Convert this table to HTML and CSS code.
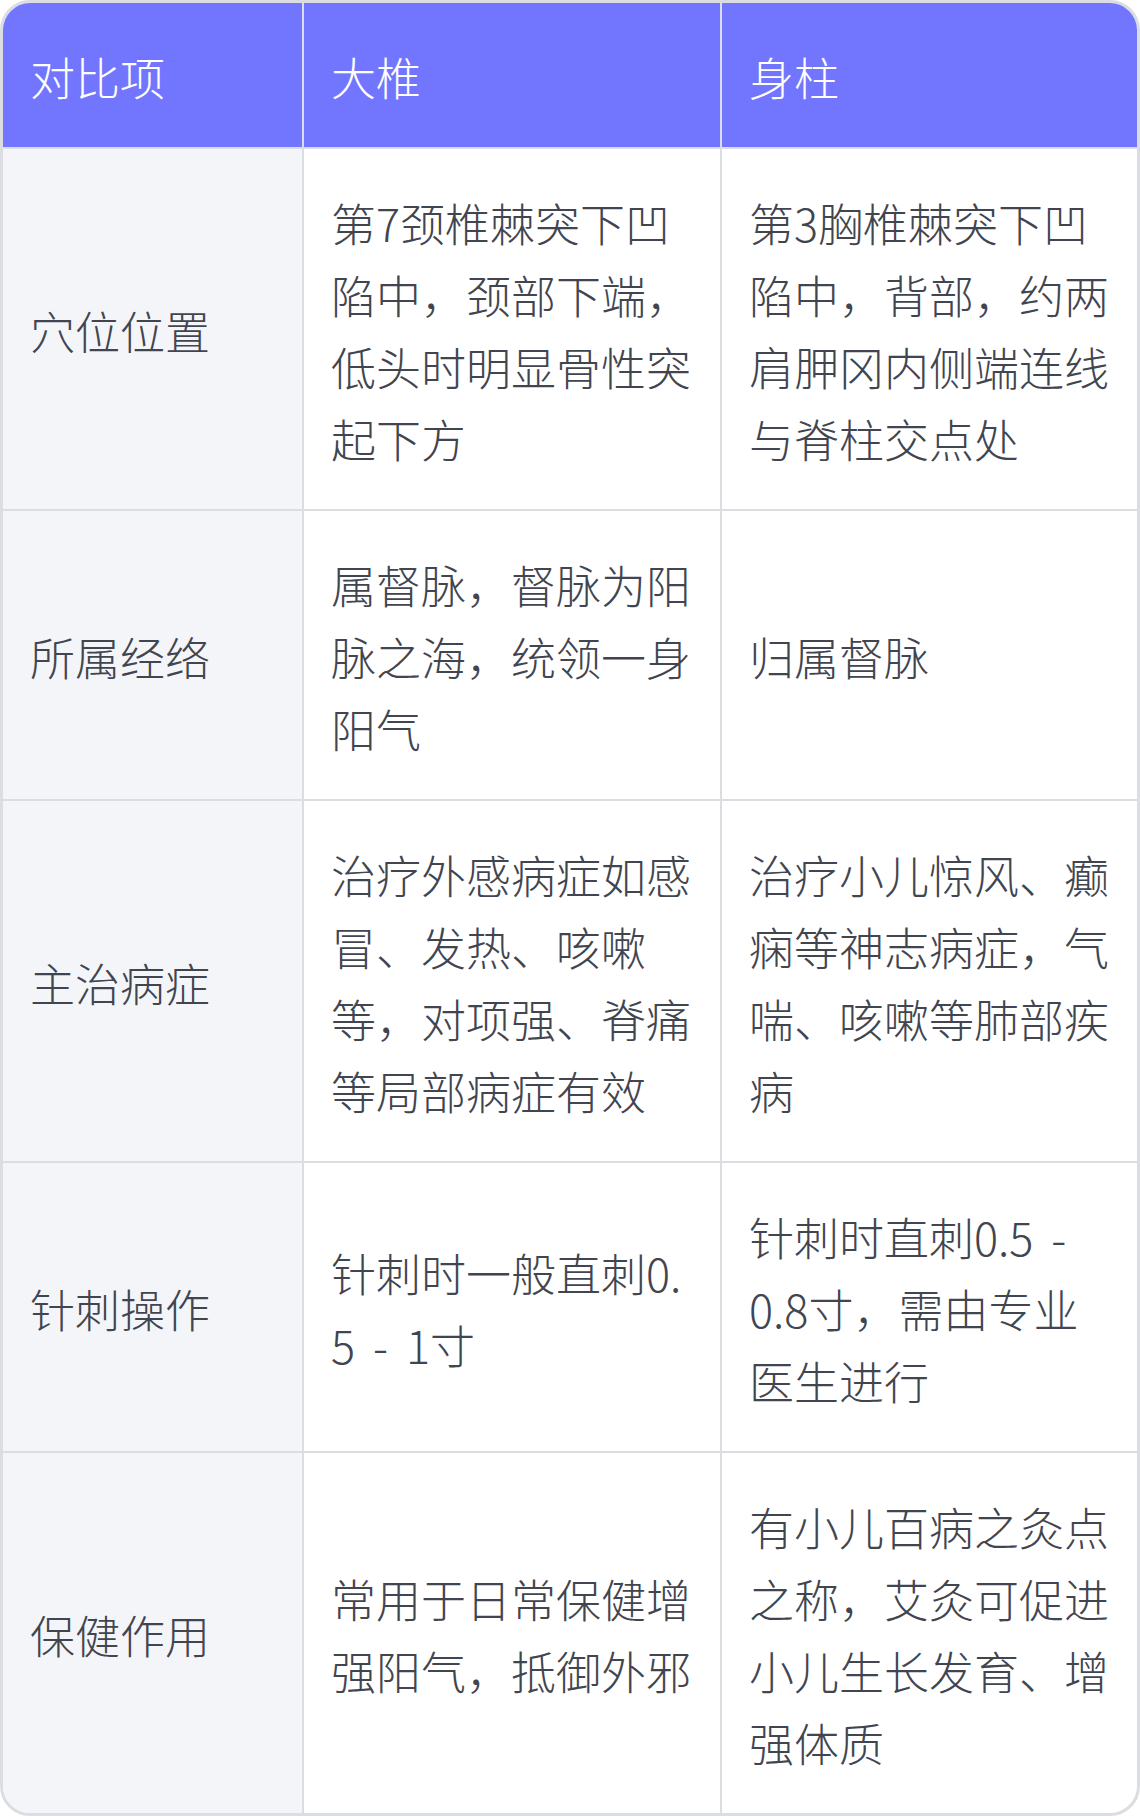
FILE: index.html
```html
<!DOCTYPE html>
<html lang="zh-CN">
<head>
<meta charset="utf-8">
<title>大椎与身柱对比</title>
<link rel="stylesheet" href="styles.css">
</head>
<body>
<div class="table-wrap">
  <table class="compare">
    <colgroup>
      <col class="col-item">
      <col class="col-a">
      <col class="col-b">
    </colgroup>
    <thead>
      <tr>
        <th>对比项</th>
        <th>大椎</th>
        <th>身柱</th>
      </tr>
    </thead>
    <tbody>
      <tr>
        <td class="label">穴位位置</td>
        <td>第7颈椎棘突下凹陷中，颈部下端，低头时明显骨性突起下方</td>
        <td>第3胸椎棘突下凹陷中，背部，约两肩胛冈内侧端连线与脊柱交点处</td>
      </tr>
      <tr>
        <td class="label">所属经络</td>
        <td>属督脉，督脉为阳脉之海，统领一身阳气</td>
        <td>归属督脉</td>
      </tr>
      <tr>
        <td class="label">主治病症</td>
        <td>治疗外感病症如感冒、发热、咳嗽等，对项强、脊痛等局部病症有效</td>
        <td>治疗小儿惊风、癫痫等神志病症，气喘、咳嗽等肺部疾病</td>
      </tr>
      <tr>
        <td class="label">针刺操作</td>
        <td>针刺时一般直刺0.5 - 1寸</td>
        <td>针刺时直刺0.5 -<br>0.8寸，需由专业医生进行</td>
      </tr>
      <tr>
        <td class="label">保健作用</td>
        <td>常用于日常保健增强阳气，抵御外邪</td>
        <td>有小儿百病之灸点之称，艾灸可促进小儿生长发育、增强体质</td>
      </tr>
    </tbody>
  </table>
</div>
</body>
</html>
```

FILE: styles.css
```css
html, body {
  margin: 0;
  padding: 0;
  background: #ffffff;
}

.table-wrap {
  width: 1140px;
  height: 1816px;
  box-sizing: border-box;
  border: 3px solid #dcdde3;
  border-radius: 30px;
  overflow: hidden;
  background: #ffffff;
}

.compare {
  width: 1134px;
  border-collapse: collapse;
  table-layout: fixed;
  font-family: "Noto Sans CJK SC", "Noto Sans", sans-serif;
  font-size: 45px;
  line-height: 72px;
  word-spacing: 8px;
  color: #41454f;
}

.col-item { width: 300px; }
.col-a { width: 418px; }
.col-b { width: 416px; }

.compare th,
.compare td {
  padding: 38px 23px 34px 27px;
  text-align: left;
  vertical-align: middle;
  word-break: break-all;
  border: 2px solid #dcdde3;
  font-weight: 300;
}

.compare tr:first-child th { border-top: none; }
.compare tr:last-child td { border-bottom: none; }
.compare th:first-child,
.compare td:first-child { border-left: none; }
.compare th:last-child,
.compare td:last-child { border-right: none; }

.compare th {
  background: #7276ff;
  color: #ffffff;
}

.compare td.label {
  background: #f4f5f9;
}
```
